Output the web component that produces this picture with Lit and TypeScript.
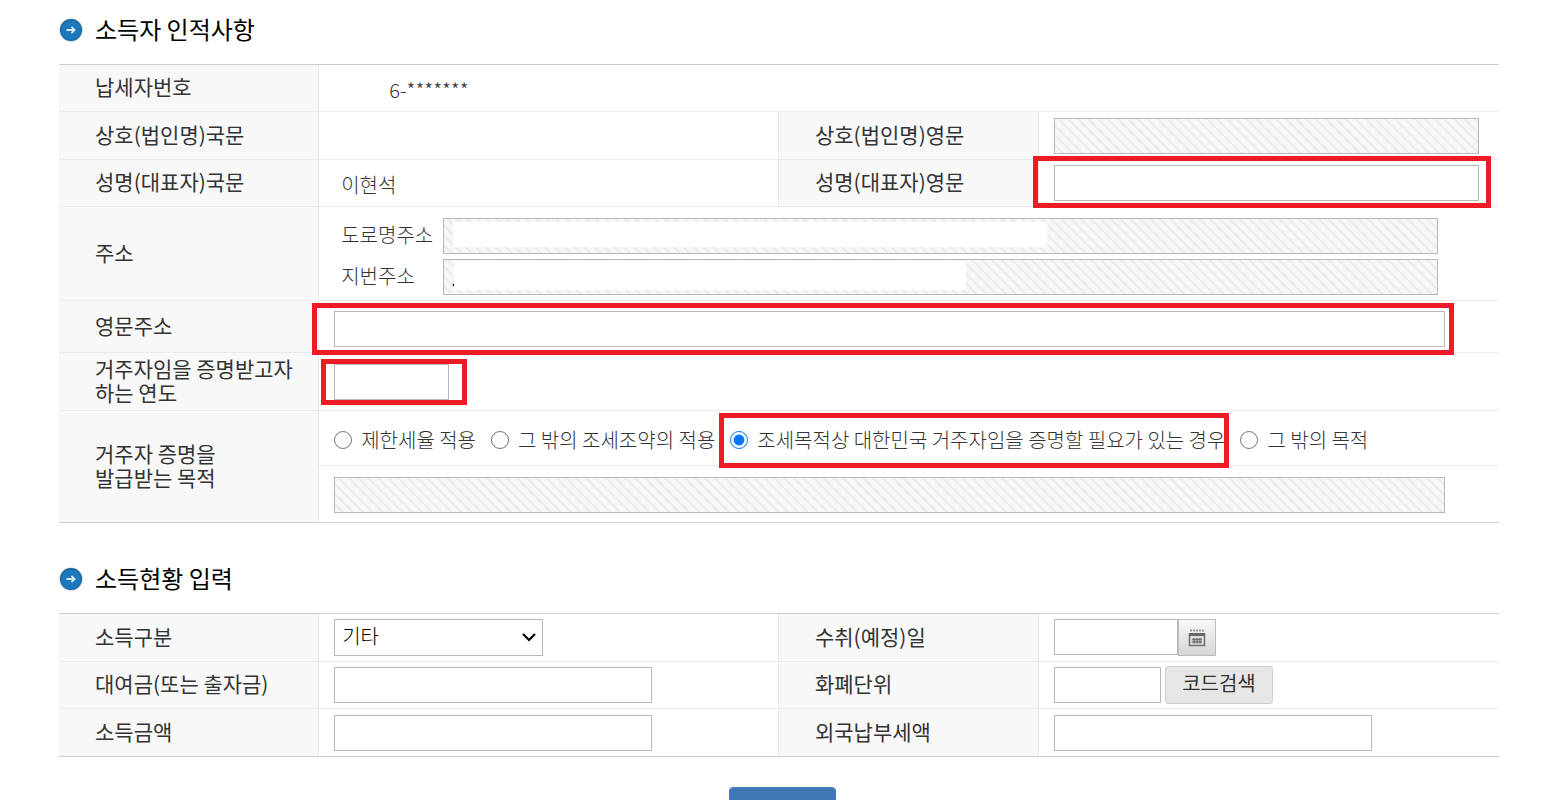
import { LitElement, html, css } from "lit";
import { customElement, property } from "lit/decorators.js";

@customElement("section-title")
class SectionTitle extends LitElement {
  @property() heading = "";

  static styles = css`
    :host {
      display: block;
    }
    .title {
      display: flex;
      align-items: center;
      gap: 12px;
      margin: 0 0 18px;
      font-size: 24px;
      line-height: 32px;
      font-weight: 400;
      color: #000;
    }
    .bullet {
      flex: none;
      width: 24px;
      height: 24px;
    }
    .words {
      padding-bottom: 2px;
      line-height: 30px;
    }
  `;

  render() {
    return html`
      <h2 class="title">
        <svg class="bullet" viewBox="0 0 24 24" aria-hidden="true">
          <circle cx="12" cy="12" r="11.6" fill="#a9c9de" />
          <circle cx="12" cy="12" r="11" fill="#20669c" />
          <circle cx="12" cy="12.4" r="9.8" fill="#1a78bb" />
          <path d="M7.500 12h7" stroke="#d5ecfa" stroke-width="2" fill="none" />
          <path d="M12.400 8.800 15.600 12l-3.200 3.200" stroke="#d5ecfa" stroke-width="1.800" fill="none" />
        </svg>
        <span class="words">${this.heading}</span>
      </h2>
    `;
  }
}

@customElement("app-root")
class AppRoot extends LitElement {
  static styles = css`
    :host {
      display: block;
      height: 100vh;
      overflow: hidden;
      background: #fff;
      color: #333;
      font-family: "Noto Sans CJK KR", "Noto Sans", sans-serif;
      font-size: 20px;
      line-height: 24px;
    }
    * {
      box-sizing: border-box;
    }
    .page {
      display: flex;
      flex-direction: column;
      gap: 40px;
      padding: 14px 69px 30px 59px;
    }
    .grid {
      width: 100%;
      table-layout: fixed;
      border-collapse: separate;
      border-spacing: 0;
      border-top: 1px solid #ccc;
    }
    .c-label {
      width: 18%;
    }
    .c-value {
      width: 32%;
    }
    th,
    td {
      height: 48px;
      border-bottom: 1px solid #ebebeb;
      text-align: left;
      vertical-align: middle;
      font-weight: 300;
    }
    td {
      padding: 0 20px 0 15px;
      border-left: 1px solid #ebebeb;
    }
    td:has(+ th) {
      border-right: 1px solid #ebebeb;
    }
    th {
      padding: 0 20px 4px 36px;
      background: #f8f8f8;
      font-size: 21px;
      font-weight: 400;
    }
    .snug > * {
      height: 47px;
    }
    .addresses > * {
      height: 94px;
    }
    .english > * {
      height: 52px;
    }
    .english > td {
      padding-top: 4px;
    }
    .year > * {
      height: 58px;
    }
    .choice > td {
      height: 55px;
    }
    .detail > td {
      height: 57px;
      padding-top: 2px;
    }
    .grid .last {
      border-bottom-color: #ccc;
    }
    .text {
      display: block;
      padding: 4px 0 0 7px;
    }
    .number {
      padding-left: 55px;
    }
    .field {
      position: relative;
      display: block;
    }
    .wide {
      width: 97%;
      min-width: 300px;
    }
    .short {
      width: 115px;
    }
    .amount {
      width: 318px;
    }
    .date {
      width: 124px;
    }
    .currency {
      width: 107px;
    }
    .combo {
      width: 209px;
    }
    input[type="text"],
    select {
      display: block;
      width: 100%;
      height: 36px;
      margin: 0;
      padding: 0 7px;
      border: 1px solid #b8b8b8;
      border-radius: 0;
      background: #fff;
      color: #000;
      font: inherit;
    }
    select {
      appearance: none;
      height: 37px;
      padding-bottom: 4px;
    }
    .arrow {
      position: absolute;
      right: 6px;
      top: 10px;
      width: 16px;
      height: 16px;
      pointer-events: none;
    }
    input[type="text"]:disabled,
    input[type="text"]:read-only {
      background: repeating-linear-gradient(45deg, #f7f7f7 0 4px, #ebebeb 5px 6px, #f7f7f7 7px);
    }
    .frame {
      position: absolute;
      border: 5px solid #ed1c24;
      pointer-events: none;
    }
    .frame-name {
      inset: -9px -12px -7px -21px;
    }
    .frame-address {
      inset: -8px -9px -8px -22px;
    }
    .frame-year {
      inset: -5px -18px -5px -13px;
    }
    .frame-purpose {
      inset: -15px -4px -16px -11px;
    }
    .lines {
      display: grid;
      grid-template-columns: 96px minmax(0, 1fr);
      column-gap: 6px;
      row-gap: 5px;
      align-items: center;
      padding: 6px 41px 0 7px;
    }
    .lines label {
      padding-bottom: 2px;
    }
    .mask {
      position: absolute;
      top: 4px;
      left: 10px;
      width: calc(60% - 3px);
      height: 25px;
      background: #fff;
    }
    .mask-low {
      top: 2px;
      left: 11px;
      width: calc(52% - 5px);
      height: 29px;
    }
    .options {
      display: flex;
      align-items: center;
      gap: 15px;
      padding-top: 3px;
      white-space: nowrap;
    }
    .option {
      position: relative;
      display: flex;
      align-items: center;
      gap: 9px;
    }
    .option input {
      flex: none;
      width: 18px;
      height: 18px;
      margin: 0;
      accent-color: #0075ff;
    }
    .pair {
      display: flex;
      align-items: center;
      gap: 4px;
    }
    .joined {
      align-items: flex-start;
      gap: 0;
    }
    .calendar {
      display: grid;
      place-items: center;
      width: 38px;
      height: 37px;
      padding: 0;
      border: 1px solid #bdbdbd;
      background: linear-gradient(#f8f8f8, #d6d6d6);
    }
    .search {
      height: 38px;
      padding: 0 16px 4px;
      border: 1px solid #cfcfcf;
      border-radius: 3px;
      background: #e6e6e6;
      color: #333;
      font: inherit;
      font-weight: 400;
      white-space: nowrap;
    }
    .actions {
      display: flex;
      justify-content: center;
      padding-right: 3px;
    }
    .submit {
      width: 107px;
      height: 44px;
      border: 1px solid #4a7fbd;
      border-radius: 4px;
      background: #4277b7;
      color: #fff;
      font: inherit;
    }
  `;

  render() {
    return html`
      <main class="page">
        <section>
          <section-title heading="소득자 인적사항"></section-title>
          <table class="grid">
            <colgroup>
              <col class="c-label" /><col class="c-value" />
              <col class="c-label" /><col class="c-value" />
            </colgroup>
            <tbody>
              <tr class="snug">
                <th scope="row">납세자번호</th>
                <td colspan="3"><span class="text number">6-*******</span></td>
              </tr>
              <tr>
                <th scope="row">상호(법인명)국문</th>
                <td></td>
                <th scope="row"><label for="company-en">상호(법인명)영문</label></th>
                <td><span class="field"><input id="company-en" type="text" disabled /></span></td>
              </tr>
              <tr class="snug">
                <th scope="row">성명(대표자)국문</th>
                <td><span class="text">이현석</span></td>
                <th scope="row"><label for="name-en">성명(대표자)영문</label></th>
                <td>
                  <span class="field">
                    <input id="name-en" type="text" />
                    <span class="frame frame-name"></span>
                  </span>
                </td>
              </tr>
              <tr class="addresses">
                <th scope="row">주소</th>
                <td colspan="3">
                  <div class="lines">
                    <label for="road">도로명주소</label>
                    <span class="field">
                      <input id="road" type="text" readonly />
                      <span class="mask"></span>
                    </span>
                    <label for="lot">지번주소</label>
                    <span class="field">
                      <input id="lot" type="text" readonly value="." />
                      <span class="mask mask-low"></span>
                    </span>
                  </div>
                </td>
              </tr>
              <tr class="english">
                <th scope="row"><label for="address-en">영문주소</label></th>
                <td colspan="3">
                  <span class="field wide">
                    <input id="address-en" type="text" />
                    <span class="frame frame-address"></span>
                  </span>
                </td>
              </tr>
              <tr class="year">
                <th scope="row"><label for="year">거주자임을 증명받고자<br />하는 연도</label></th>
                <td colspan="3">
                  <span class="field short">
                    <input id="year" type="text" />
                    <span class="frame frame-year"></span>
                  </span>
                </td>
              </tr>
              <tr class="choice">
                <th class="last" scope="rowgroup" rowspan="2">
                  <label for="purpose-detail">거주자 증명을<br />발급받는 목적</label>
                </th>
                <td colspan="3">
                  <div class="options">
                    <label class="option"><input type="radio" name="purpose" />제한세율 적용</label>
                    <label class="option"><input type="radio" name="purpose" />그 밖의 조세조약의 적용</label>
                    <label class="option">
                      <input type="radio" name="purpose" checked />조세목적상 대한민국 거주자임을 증명할 필요가 있는 경우
                      <span class="frame frame-purpose"></span>
                    </label>
                    <label class="option"><input type="radio" name="purpose" />그 밖의 목적</label>
                  </div>
                </td>
              </tr>
              <tr class="detail">
                <td class="last" colspan="3">
                  <span class="field wide"><input id="purpose-detail" type="text" disabled /></span>
                </td>
              </tr>
            </tbody>
          </table>
        </section>

        <section>
          <section-title heading="소득현황 입력"></section-title>
          <table class="grid">
            <colgroup>
              <col class="c-label" /><col class="c-value" />
              <col class="c-label" /><col class="c-value" />
            </colgroup>
            <tbody>
              <tr>
                <th scope="row"><label for="kind">소득구분</label></th>
                <td>
                  <span class="field combo">
                    <select id="kind"><option>기타</option></select>
                    <svg class="arrow" viewBox="0 0 16 16" aria-hidden="true">
                      <path d="M2 5l6 6 6-6" fill="none" stroke="#000" stroke-width="2.2" />
                    </svg>
                  </span>
                </td>
                <th scope="row"><label for="date">수취(예정)일</label></th>
                <td>
                  <div class="pair joined">
                    <span class="field date"><input id="date" type="text" /></span>
                    <button class="calendar" type="button" aria-label="달력">
                      <svg width="18" height="18" viewBox="0 0 18 18" aria-hidden="true">
                        <path d="M2 1.5h14" stroke="#9a9a9a" stroke-width="2" stroke-dasharray="2 1" />
                        <rect x="1.500" y="5" width="15" height="11.500" fill="#ddd" stroke="#777" stroke-width="1.600" />
                        <path d="M1 5.500h16" stroke="#666" stroke-width="3" />
                        <path d="M4 10.500h10M4 13h10" stroke="#777" stroke-width="1.600" />
                        <path d="M6 9v5.500M9 9v5.500M12 9v5.500" stroke="#777" stroke-width="1.500" />
                      </svg>
                    </button>
                  </div>
                </td>
              </tr>
              <tr class="snug">
                <th scope="row"><label for="loan">대여금(또는 출자금)</label></th>
                <td><span class="field amount"><input id="loan" type="text" /></span></td>
                <th scope="row"><label for="currency">화폐단위</label></th>
                <td>
                  <div class="pair">
                    <span class="field currency"><input id="currency" type="text" /></span>
                    <button class="search" type="button">코드검색</button>
                  </div>
                </td>
              </tr>
              <tr>
                <th class="last" scope="row"><label for="income">소득금액</label></th>
                <td class="last"><span class="field amount"><input id="income" type="text" /></span></td>
                <th class="last" scope="row"><label for="tax">외국납부세액</label></th>
                <td class="last"><span class="field amount"><input id="tax" type="text" /></span></td>
              </tr>
            </tbody>
          </table>
        </section>
      </main>
      <div class="actions"><button class="submit" type="button" aria-label="신청하기"></button></div>
    `;
  }
}
